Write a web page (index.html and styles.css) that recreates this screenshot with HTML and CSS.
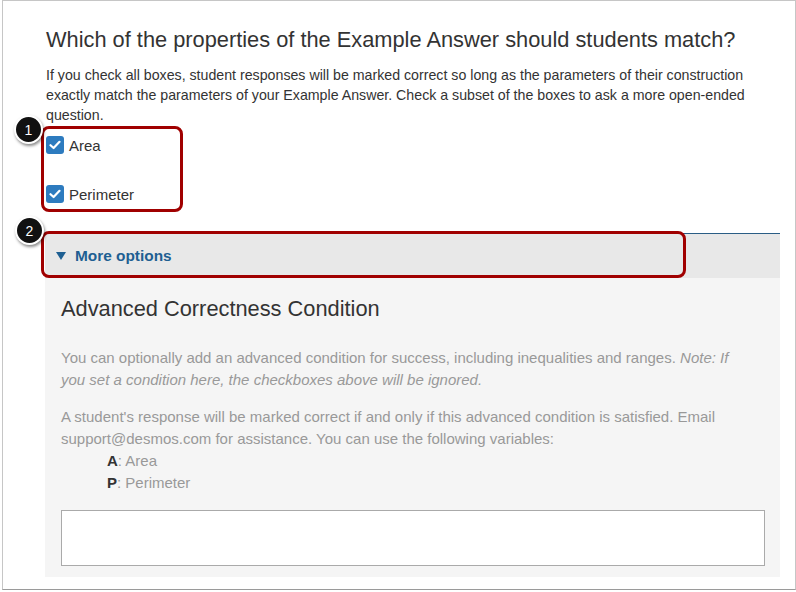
FILE: index.html
```html
<!DOCTYPE html>
<html>
<head>
<meta charset="utf-8">
<link rel="stylesheet" href="styles.css">
</head>
<body>
<div class="window">
  <h1 class="title">Which of the properties of the Example Answer should students match?</h1>
  <p class="intro">If you check all boxes, student responses will be marked correct so long as the parameters of their construction exactly match the parameters of your Example Answer. Check a subset of the boxes to ask a more open-ended question.</p>
  <div class="checks">
    <label class="check"><span class="box"><svg width="12" height="10" viewBox="0 0 12 10"><path d="M1.5 5.2 L4.6 8 L10.5 1.8" fill="none" stroke="#fff" stroke-width="2.2" stroke-linecap="round" stroke-linejoin="round"/></svg></span>Area</label>
    <label class="check"><span class="box"><svg width="12" height="10" viewBox="0 0 12 10"><path d="M1.5 5.2 L4.6 8 L10.5 1.8" fill="none" stroke="#fff" stroke-width="2.2" stroke-linecap="round" stroke-linejoin="round"/></svg></span>Perimeter</label>
  </div>
  <section class="more">
    <div class="more-head"><span class="tri"></span>More options</div>
    <div class="more-body">
      <h2 class="sub">Advanced Correctness Condition</h2>
      <p class="muted">You can optionally add an advanced condition for success, including inequalities and ranges. <em>Note: If you set a condition here, the checkboxes above will be ignored.</em></p>
      <p class="muted tight">A student's response will be marked correct if and only if this advanced condition is satisfied. Email support@desmos.com for assistance. You can use the following variables:</p>
      <ul class="vars">
        <li><b>A</b>: Area</li>
        <li><b>P</b>: Perimeter</li>
      </ul>
      <div class="input"></div>
    </div>
  </section>
</div>
<div class="hl hl-1"></div>
<div class="hl hl-2"></div>
<div class="badge badge-1">1</div>
<div class="badge badge-2">2</div>
</body>
</html>
```
FILE: styles.css
```css
html, body { margin: 0; padding: 0; background: #fff; }
body { font-family: "Liberation Sans", Arial, sans-serif; color: #333; }

.window {
  margin-left: 2px;
  width: 792px;
  height: 588px;
  border: 1px solid #c6c6c6;
  border-bottom-color: #9a9a9a;
  box-sizing: content-box;
  overflow: hidden;
}

.title {
  margin: 27px 0 0 43px;
  font-size: 21.8px;
  line-height: 24px;
  font-weight: normal;
  color: #333;
}

.intro {
  margin: 13px 40px 0 43px;
  font-size: 14.2px;
  line-height: 20px;
  color: #333;
}

.checks {
  margin: 8px 0 0 43px;
  display: flex;
  flex-direction: column;
  gap: 25px;
}
.check {
  display: flex;
  align-items: center;
  height: 24px;
  font-size: 15px;
  color: #333;
}
.box {
  width: 18px;
  height: 18px;
  border-radius: 3px;
  background: #2d7bbf;
  display: flex;
  align-items: center;
  justify-content: center;
  margin-right: 5px;
}

.more {
  margin: 27px 0 0 42px;
  width: 735px;
  border-top: 1px solid #2a5d85;
}
.more-head {
  height: 44px;
  background: #e8e8e8;
  display: flex;
  align-items: center;
  padding-left: 11px;
  font-size: 15.4px;
  font-weight: bold;
  color: #1e5f92;
}
.tri {
  width: 0; height: 0;
  border-left: 5px solid transparent;
  border-right: 5px solid transparent;
  border-top: 8px solid #1e5f92;
  margin-right: 9px;
}
.more-body {
  background: #f5f5f5;
  padding: 19px 35px 11px 16px;
}
.sub {
  margin: 0;
  font-size: 21.8px;
  line-height: 24px;
  font-weight: normal;
  color: #333;
}
.muted {
  margin: 26px 0 0;
  font-size: 15px;
  line-height: 22px;
  color: #999;
}
.muted.tight { margin-top: 15px; }
.vars {
  list-style: none;
  margin: 0;
  padding-left: 46px;
  font-size: 15px;
  line-height: 22px;
  color: #999;
}
.vars b { color: #333; }
.input {
  margin-top: 16px;
  height: 54px;
  width: 702px;
  background: #fff;
  border: 1px solid #aaa;
}

.hl {
  position: absolute;
  border: 3px solid #a00000;
  border-radius: 8px;
  box-sizing: border-box;
}
.hl-1 { left: 41px; top: 126px; width: 142px; height: 86px; }
.hl-2 { left: 41px; top: 231px; width: 645px; height: 47px; }

.badge {
  position: absolute;
  width: 29px;
  height: 29px;
  box-sizing: border-box;
  border-radius: 50%;
  background: #111;
  border: 2px solid #fff;
  box-shadow: 1px 2px 3px rgba(0,0,0,0.45);
  color: #fff;
  font-size: 14px;
  display: flex;
  align-items: center;
  justify-content: center;
}
.badge-1 { left: 14px; top: 115px; }
.badge-2 { left: 15px; top: 216px; }
```
